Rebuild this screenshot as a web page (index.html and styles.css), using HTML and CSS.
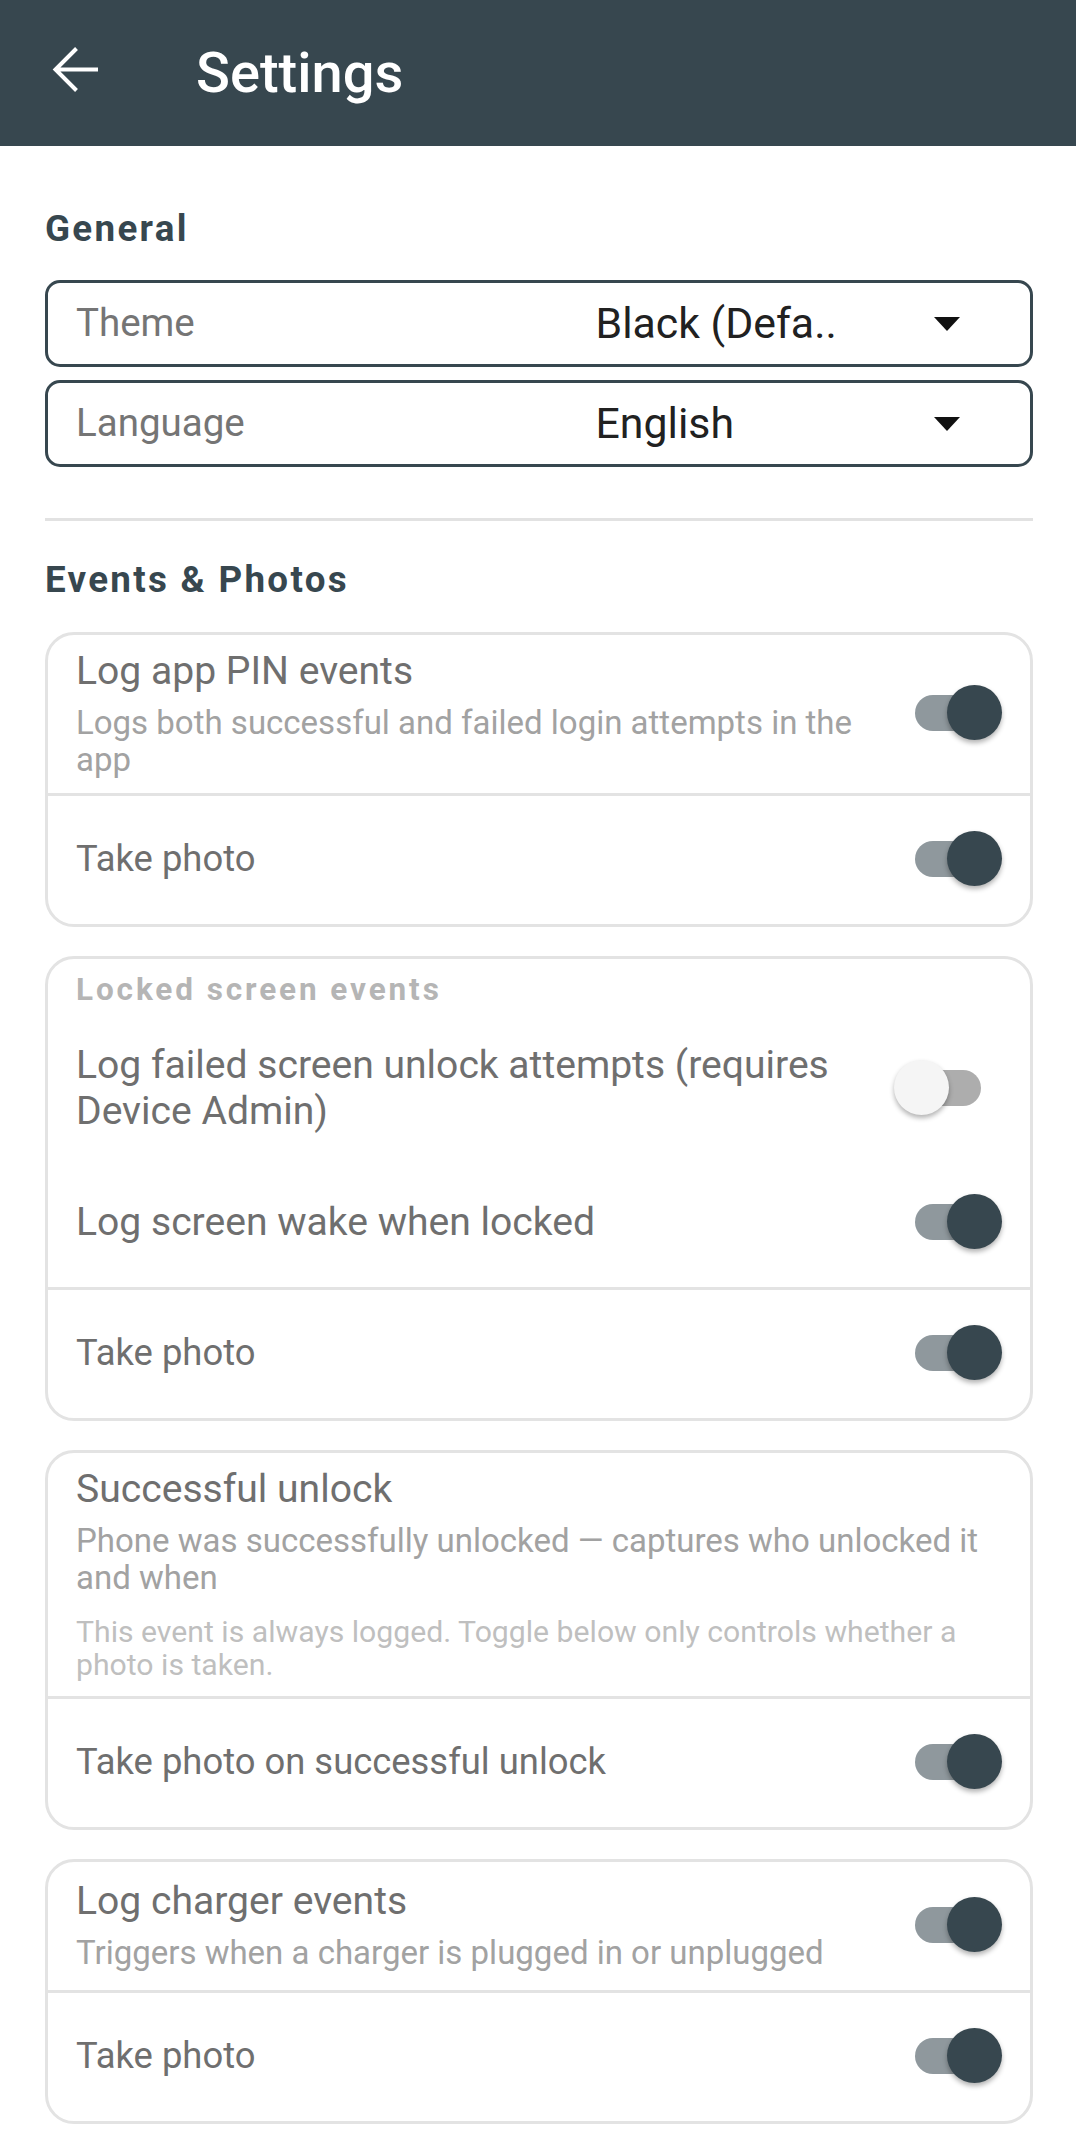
FILE: index.html
```html
<!DOCTYPE html>
<html lang="en">
<head>
  <meta charset="UTF-8" />
  <title>Settings</title>
  <link rel="stylesheet" href="styles.css">
</head>
<body>
  <header class="toolbar">
    <svg class="back" width="48" height="48" viewBox="0 0 48 48">
      <path d="M46 23.5H4 M24.5 2.5L3.5 23.5L24.5 44.5" fill="none" stroke="#fff" stroke-width="4" />
    </svg>
    <h1>Settings</h1>
  </header>

  <main class="content">
    <h2 class="section first">General</h2>

    <div class="picker">
      <span class="picker-label">Theme</span>
      <span class="picker-value">Black (Defa..</span>
      <span class="caret"></span>
    </div>
    <div class="picker">
      <span class="picker-label">Language</span>
      <span class="picker-value">English</span>
      <span class="caret"></span>
    </div>

    <hr class="divider">

    <h2 class="section">Events &amp; Photos</h2>

    <!-- app pin -->
    <div class="card">
      <div class="row">
        <div class="row-text">
          <div class="row-title">Log app PIN events</div>
          <div class="row-desc">Logs both successful and failed login attempts in the app</div>
        </div>
        <span class="switch on"></span>
      </div>
      <div class="row sep">
        <div class="row-text"><div class="row-title small">Take photo</div></div>
        <span class="switch on"></span>
      </div>
    </div>

    <!-- locked screen -->
    <div class="card">
      <div class="card-caption">Locked screen events</div>
      <div class="row tall">
        <div class="row-text">
          <div class="row-title">Log failed screen unlock attempts (requires Device Admin)</div>
        </div>
        <span class="switch off"></span>
      </div>
      <div class="row">
        <div class="row-text"><div class="row-title">Log screen wake when locked</div></div>
        <span class="switch on"></span>
      </div>
      <div class="row sep">
        <div class="row-text"><div class="row-title small">Take photo</div></div>
        <span class="switch on"></span>
      </div>
    </div>

    <!-- successful unlock -->
    <div class="card">
      <div class="row">
        <div class="row-text">
          <div class="row-title">Successful unlock</div>
          <div class="row-desc">Phone was successfully unlocked — captures who unlocked it and when</div>
          <div class="row-note">This event is always logged. Toggle below only controls whether a photo is taken.</div>
        </div>
      </div>
      <div class="row sep">
        <div class="row-text"><div class="row-title small">Take photo on successful unlock</div></div>
        <span class="switch on"></span>
      </div>
    </div>

    <!-- charger -->
    <div class="card">
      <div class="row">
        <div class="row-text">
          <div class="row-title">Log charger events</div>
          <div class="row-desc">Triggers when a charger is plugged in or unplugged</div>
        </div>
        <span class="switch on"></span>
      </div>
      <div class="row sep">
        <div class="row-text"><div class="row-title small">Take photo</div></div>
        <span class="switch on"></span>
      </div>
    </div>
  </main>
</body>
</html>
```

FILE: styles.css
```css
body {
  margin: 0;
  background: #fff;
  font-family: Roboto, "Liberation Sans", sans-serif;
}

/* top bar */
.toolbar {
  height: 146px;
  background: #37474f;
  display: flex;
  align-items: center;
  padding-left: 52px;
}
.back { margin: 0 96px 7px 0; flex: none; }
.toolbar h1 {
  margin: 0;
  color: #fff;
  font-size: 56px;
  font-weight: 500;
  line-height: 64px;
}

.content { padding: 61px 43px 0 45px; }

.section {
  margin: 0 0 29.5px;
  color: #37474f;
  font-size: 36.75px;
  font-weight: 700;
  letter-spacing: 2.3px;
  line-height: 44px;
}
.section.first { margin-bottom: 28.5px; }

/* dropdowns */
.picker {
  height: 87px;
  box-sizing: border-box;
  border: 3px solid #37474f;
  border-radius: 15px;
  display: flex;
  align-items: center;
  padding: 0 70px 0 28px;
  margin-bottom: 13px;
}
.picker-label {
  flex: 0 0 519.5px;
  color: #757575;
  font-size: 38.5px;
  line-height: 46px;
}
.picker-value {
  flex: 1;
  color: #212121;
  font-size: 42.8px;
  line-height: 49px;
  white-space: nowrap;
}
.caret {
  width: 0;
  height: 0;
  border-left: 13.5px solid transparent;
  border-right: 13.5px solid transparent;
  border-top: 14px solid #111;
  margin-top: 2px;
}

.divider {
  border: none;
  height: 3px;
  background: #e2e2e2;
  margin: 51px 0 37.5px;
}

/* cards */
.card {
  border: 3px solid #e3e3e3;
  border-radius: 29px;
  margin-bottom: 29px;
  overflow: hidden;
}
.card-caption {
  padding: 13px 28px 9px;
  color: #b5b5b5;
  font-size: 31.5px;
  font-weight: 700;
  letter-spacing: 2.9px;
  line-height: 36px;
}
.row {
  display: flex;
  align-items: center;
  gap: 24px;
  min-height: 128px;
  box-sizing: border-box;
  padding: 13px 28px 15px;
}
.row.sep {
  border-top: 3px solid #e3e3e3;
  min-height: 131px;
}
.row.tall { padding: 25px 28px; min-height: 142px; }
.row-text { flex: 1; }
.row-title {
  color: #6f6f6f;
  font-size: 39.1px;
  line-height: 46px;
}
.row-title.small { font-size: 36.4px; }
.row-desc {
  margin-top: 10px;
  color: #a2a2a2;
  font-size: 33px;
  line-height: 37px;
}
.row-note {
  margin-top: 19px;
  color: #bfbfbf;
  font-size: 30.2px;
  line-height: 33px;
}

/* switches */
.switch {
  position: relative;
  flex: 0 0 87px;
  height: 55px;
}
.switch::before {
  content: "";
  position: absolute;
  top: 9.5px;
  width: 74px;
  height: 36px;
  border-radius: 18px;
}
.switch::after {
  content: "";
  position: absolute;
  top: 0;
  width: 55px;
  height: 55px;
  border-radius: 50%;
  box-shadow: 0 3px 5px rgba(0,0,0,0.3);
}
.switch.on::before { left: 0; background: #8f989d; }
.switch.on::after { left: 32px; background: #37474f; }
.switch.off { margin-right: 21px; }
.switch.off::before { left: 13px; background: #adadad; }
.switch.off::after { left: 0; background: #f5f5f5; }
```
